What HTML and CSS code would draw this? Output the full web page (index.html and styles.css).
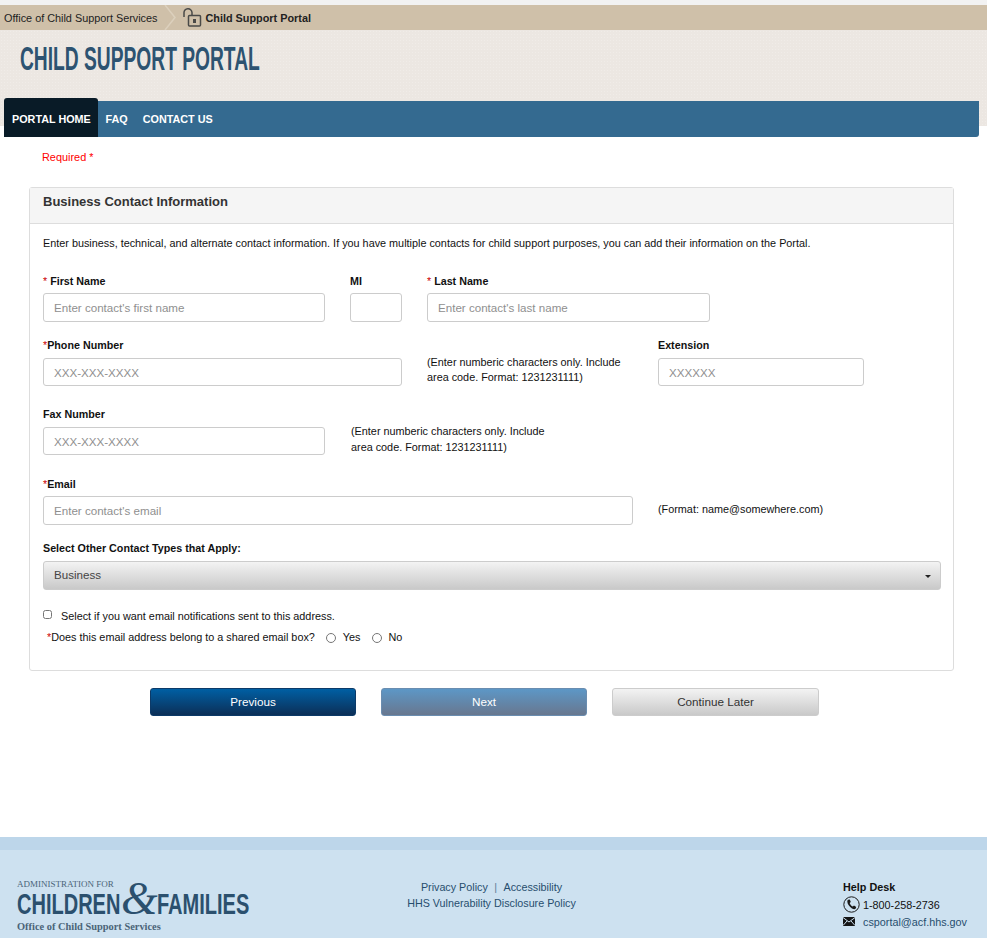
FILE: index.html
```html
<!DOCTYPE html>
<html lang="en">
<head>
  <meta charset="UTF-8" />
  <title>Child Support Portal</title>
  <link rel="stylesheet" href="styles.css">
</head>
<body>
  <header class="masthead">
    <div class="crumbs">
      <a class="crumb-home">Office of Child Support Services</a>
      <svg class="crumb-sep" width="20" height="25" viewBox="0 0 20 25"><path d="M3 0 L13 12.5 L3 25" fill="none" stroke="#dcd0bd" stroke-width="1.5"/></svg>
      <svg class="crumb-lock" width="20" height="20" viewBox="0 0 20 20">
        <path d="M2 9 V5 A4 4 0 0 1 10 4.5 V7" fill="none" stroke="#4a4a48" stroke-width="1.5"/>
        <rect x="6.5" y="7.5" width="12" height="10.5" rx="1" fill="#cfc0a9" stroke="#4a4a48" stroke-width="1.5"/>
        <rect x="11" y="11" width="3" height="4" fill="#4a4a48"/>
      </svg>
      <span class="crumb-current">Child Support Portal</span>
    </div>
    <div class="banner">
      <h1 class="site-title"><span>CHILD SUPPORT PORTAL</span></h1>
      <nav class="mainnav">
        <a class="active">PORTAL HOME</a>
        <a>FAQ</a>
        <a>CONTACT US</a>
      </nav>
    </div>
  </header>

  <main>
    <p class="required-note">Required *</p>

    <section class="panel">
      <h2 class="panel-heading">Business Contact Information</h2>
      <div class="panel-body">
        <p class="intro">Enter business, technical, and alternate contact information. If you have multiple contacts for child support purposes, you can add their information on the Portal.</p>

        <div class="row row-name">
          <div class="field w-282">
            <label><span class="req">*</span> First Name</label>
            <input type="text" placeholder="Enter contact's first name">
          </div>
          <div class="field w-52">
            <label>MI</label>
            <input type="text">
          </div>
          <div class="field w-283">
            <label><span class="req">*</span> Last Name</label>
            <input type="text" placeholder="Enter contact's last name">
          </div>
        </div>

        <div class="row row-phone">
          <div class="field w-359">
            <label><span class="req">*</span>Phone Number</label>
            <input type="text" placeholder="XXX-XXX-XXXX">
          </div>
          <p class="hint hint-wide">(Enter numberic characters only. Include area code. Format: 1231231111)</p>
          <div class="field w-206">
            <label>Extension</label>
            <input type="text" placeholder="XXXXXX">
          </div>
        </div>

        <div class="row row-fax">
          <div class="field w-282">
            <label>Fax Number</label>
            <input type="text" placeholder="XXX-XXX-XXXX">
          </div>
          <p class="hint hint-fax">(Enter numberic characters only. Include area code. Format: 1231231111)</p>
        </div>

        <div class="row row-email">
          <div class="field w-590">
            <label><span class="req">*</span>Email</label>
            <input type="text" placeholder="Enter contact's email">
          </div>
          <p class="hint hint-email">(Format: name@somewhere.com)</p>
        </div>

        <div class="field field-types">
          <label>Select Other Contact Types that Apply:</label>
          <div class="select-box">Business<span class="caret"></span></div>
        </div>

        <label class="check-line"><input type="checkbox"> Select if you want email notifications sent to this address.</label>
        <div class="radio-line">
          <span class="radio-q"><span class="req">*</span>Does this email address belong to a shared email box?</span>
          <label><input type="radio" name="shared"> Yes</label>
          <label><input type="radio" name="shared"> No</label>
        </div>
      </div>
    </section>

    <div class="actions">
      <button class="btn btn-prev">Previous</button>
      <button class="btn btn-next">Next</button>
      <button class="btn btn-later">Continue Later</button>
    </div>
  </main>

  <footer class="site-footer">
    <div class="acf-logo">
      <div class="logo-top">ADMINISTRATION FOR</div>
      <div class="logo-main"><span class="logo-children">CHILDREN</span><i>&amp;</i><span class="logo-families">FAMILIES</span></div>
      <div class="logo-sub">Office of Child Support Services</div>
    </div>
    <div class="foot-links">
      <div><a>Privacy Policy</a><span class="pipe">|</span><a>Accessibility</a></div>
      <div><a>HHS Vulnerability Disclosure Policy</a></div>
    </div>
    <div class="helpdesk">
      <strong>Help Desk</strong>
      <div class="help-line">
        <svg width="17" height="17" viewBox="0 0 17 17"><circle cx="8.5" cy="8.5" r="7.7" fill="none" stroke="#1a1a1a" stroke-width="1"/><path d="M5 3.8 L6.8 3.4 L7.8 6 L6.7 7 C7 8.4 8.2 9.9 9.8 10.6 L11 9.6 L13.2 11 L12.7 12.6 C12 13.4 10.6 13.4 9 12.5 C6.4 11 4.4 8.2 4.3 5.6 C4.3 4.8 4.5 4.2 5 3.8 Z" fill="#1a1a1a"/></svg>
        <span>1-800-258-2736</span>
      </div>
      <div class="help-line mail">
        <svg width="12" height="9" viewBox="0 0 12 9"><rect width="12" height="9" fill="#151515"/><path d="M0 0.5 L6 5 L12 0.5 M0 8.5 L4 4 M12 8.5 L8 4" fill="none" stroke="#cde1f0" stroke-width="1"/></svg>
        <a>csportal@acf.hhs.gov</a>
      </div>
    </div>
  </footer>
</body>
</html>
```

FILE: styles.css
```css
/* Base */
* { box-sizing: border-box; margin: 0; padding: 0; }
html, body { height: 938px; overflow: hidden; }
body {
  font-family: "Liberation Sans", Arial, sans-serif;
  font-size: 11px;
  color: #111;
  background: #fff;
}

/* Header */
.masthead { padding-top: 5px; background: #f2f2f2; }
.crumbs {
  display: flex;
  align-items: center;
  height: 25px;
  padding-left: 4px;
  background: #cfc0a9;
  color: #222;
  font-size: 10.85px;
}
.crumb-sep { margin-left: 4px; }
.crumb-current { margin-left: 4px; font-weight: bold; }

.banner {
  height: 96px;
  background-color: #ece7e2;
  background-image: radial-gradient(rgba(255,255,255,.22) 1px, transparent 1px);
  background-size: 3px 3px;
  padding: 10px 8px 0 4px;
}
.site-title {
  height: 58px;
  padding-left: 16px;
  color: #2d5371;
  font-size: 34px;
  font-weight: bold;
  line-height: 36px;
  white-space: nowrap;
}
/* no condensed face available, so squeeze the bold one */
.site-title span {
  display: inline-block;
  transform: scaleX(.565);
  transform-origin: left center;
}

/* Nav hangs off the bottom of the banner */
.mainnav {
  display: flex;
  align-items: flex-end;
  height: 39px;
  margin-bottom: -11px;
  background: linear-gradient(#ece7e2 3px, #346a90 3px);
  border-radius: 0 3px 3px 0;
}
.mainnav a {
  display: block;
  height: 36px;
  padding: 0 7.5px;
  color: #fff;
  font-size: 10.8px;
  font-weight: bold;
  line-height: 36px;
}
.mainnav a.active {
  width: 94px;
  height: 39px;
  padding: 3px 0 0 8px;
  background: #091b27;
  border-radius: 3px 3px 0 0;
}

main { padding: 0 33px 0 29px; }
.required-note {
  margin: 25px 0 24px 13px;
  color: #f00;
  font-size: 10.9px;
  line-height: 12px;
}

/* Panel */
.panel {
  height: 484px;
  border: 1px solid #ddd;
  border-radius: 3px;
}
.panel-heading {
  height: 36px;
  padding: 6px 13px 0;
  background: #f5f5f5;
  border-bottom: 1px solid #ddd;
  color: #333;
  font-size: 13px;
  font-weight: bold;
  line-height: 15px;
}
.panel-body { padding: 13px 12px 0 13px; }
.intro { font-size: 10.83px; line-height: 13px; }

.row { display: flex; gap: 25px; }
.row-name { margin-top: 25px; }
.row-phone { margin-top: 17px; }
.row-fax { margin-top: 22px; }
.row-email { margin-top: 23px; }

.field label {
  display: block;
  height: 18px;
  font-size: 10.72px;
  font-weight: bold;
  line-height: 13px;
}
.row-phone .field label, .row-fax .field label { height: 19px; }
.req { color: #c00; font-weight: normal; }
.field input {
  display: block;
  width: 100%;
  height: 29px;
  padding: 0 10px;
  border: 1px solid #ccc;
  border-radius: 3px;
  font-family: inherit;
  font-size: 11.6px;
  background: #fff;
}
.row-phone .field input, .row-fax .field input { height: 28px; }
.field input::placeholder { color: #8f8f8f; }

.w-282 { width: 282px; }
.w-52 { width: 52px; }
.w-283 { width: 283px; }
.w-359 { width: 359px; }
.w-206 { width: 206px; }
.w-590 { width: 590px; }

.hint { font-size: 10.84px; line-height: 15.5px; }
.hint-wide { width: 206px; padding-top: 16px; line-height: 15px; }
.hint-fax { width: 200px; padding-top: 16px; margin-left: 1px; }
.hint-email { padding-top: 24px; }

.field-types { margin-top: 17px; }
.field-types label { height: 19px; }
.select-box {
  position: relative;
  height: 29px;
  padding-left: 10px;
  border: 1px solid #ccc;
  border-radius: 3px;
  background: linear-gradient(#f3f3f3, #c9c9c9);
  color: #444;
  font-size: 11.6px;
  line-height: 26px;
}
.caret {
  position: absolute;
  right: 9px;
  top: 13px;
  border-top: 3px solid #222;
  border-left: 3px solid transparent;
  border-right: 3px solid transparent;
}

.check-line {
  display: flex;
  align-items: center;
  gap: 9px;
  margin-top: 19px;
  font-size: 10.84px;
  line-height: 14px;
}
.check-line input { width: 9px; height: 9px; margin-top: -3px; }
.radio-line {
  display: flex;
  align-items: center;
  margin: 7px 0 0 4px;
  font-size: 10.84px;
  line-height: 14px;
}
.radio-line label { display: flex; align-items: center; gap: 7px; margin-left: 11px; }
.radio-line label input { width: 10px; height: 10px; margin-top: 1px; }
.radio-q { margin-top: -1px; }

/* Buttons */
.actions {
  display: flex;
  gap: 25px;
  margin-top: 17px;
  padding-left: 121px;
}
.btn {
  flex: none;
  width: 206px;
  height: 28px;
  padding-bottom: 2px;
  border-radius: 3px;
  border: 1px solid transparent;
  font-family: inherit;
  font-size: 11.7px;
}
.btn-prev { color: #fff; background: linear-gradient(#005fa3, #0c2f57); border-color: #0c3a68; }
.btn-next { color: #fff; background: linear-gradient(#5d97c6, #68778f); border-color: #6a8db0; }
.btn-later { color: #333; background: linear-gradient(#f3f3f3, #c9c9c9); border-color: #ccc; width: 207px; }

/* Footer */
.site-footer {
  position: absolute;
  left: 0;
  right: 0;
  top: 837px;
  height: 101px;
  display: flex;
  padding: 13px 20px 0 17px;
  border-top: 13px solid #bdd6ea;
  background: #cde1f0;
  background-clip: padding-box;
}
.acf-logo { flex: none; width: 270px; padding-top: 17px; color: #2b506e; }
.logo-top { font-family: "Liberation Serif", serif; font-size: 9px; line-height: 9px; color: #4a6478; }
.logo-main {
  display: flex;
  align-items: center;
  height: 27px;
  margin-top: 2px;
  font-size: 29px;
  font-weight: bold;
  line-height: 27px;
}
.logo-main span {
  display: block;
  flex: none;
  white-space: nowrap;
  transform: scaleX(.69);
  transform-origin: left center;
}
.logo-children { width: 102px; }
.logo-families { width: 92px; }
.logo-main i {
  flex: none;
  width: 36px;
  margin: 0 0 12px 2px;
  font-family: "Liberation Serif", serif;
  font-size: 47px;
  font-weight: normal;
  line-height: 27px;
  text-align: center;
}
.logo-sub {
  margin-top: 3px;
  font-family: "Liberation Serif", serif;
  font-size: 10.4px;
  font-weight: bold;
  line-height: 12px;
  color: #4a6478;
}

.foot-links {
  flex: none;
  width: 170px;
  margin-left: 119.5px;
  padding-top: 16px;
  text-align: center;
  color: #274e6e;
  font-size: 10.75px;
  line-height: 16px;
}
.pipe { margin: 0 6.5px; color: #5d7d98; }

.helpdesk { flex: none; margin-left: 266.5px; padding-top: 18px; font-size: 10.8px; }
.helpdesk strong { display: block; line-height: 13px; }
.help-line { display: flex; align-items: center; gap: 3px; margin-top: 2px; height: 17px; }
.help-line.mail { gap: 8px; margin-top: 0; color: #274e6e; }
```
